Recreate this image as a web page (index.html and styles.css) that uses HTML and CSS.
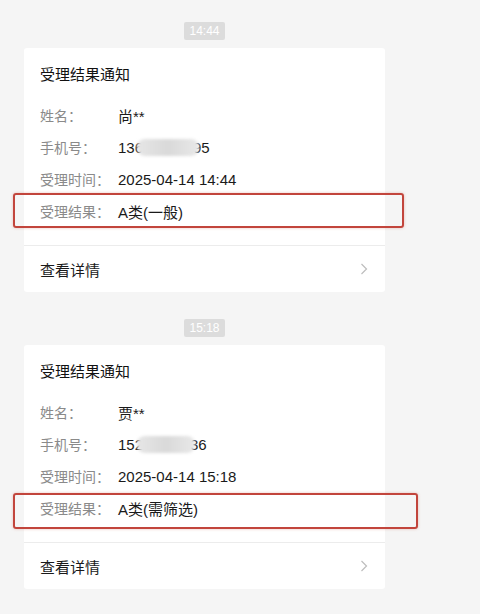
FILE: index.html
```html
<!DOCTYPE html>
<html lang="zh-CN">
<head>
    <meta charset="UTF-8">
    <meta name="viewport" content="width=device-width, initial-scale=1.0">
    <title>受理结果通知</title>
    <link rel="stylesheet" href="styles.css">
</head>
<body>
    <div class="chat">
        <div class="time"><span>14:44</span></div>
        <div class="card">
            <div class="card-title">受理结果通知</div>
            <div class="rows">
                <div class="row"><span class="label">姓名：</span><span class="value">尚**</span></div>
                <div class="row"><span class="label">手机号：</span><span class="value">136<span class="blur blur-a"></span>95</span></div>
                <div class="row"><span class="label">受理时间：</span><span class="value">2025-04-14 14:44</span></div>
                <div class="row result"><span class="label">受理结果：</span><span class="value">A类(一般)</span><span class="mark mark-a"></span></div>
            </div>
            <div class="more">
                <span>查看详情</span>
                <svg class="chev" width="8" height="12" viewBox="0 0 8 12"><polyline points="1.5,1 6.5,6 1.5,11" fill="none" stroke="#bdbdbd" stroke-width="1.2"/></svg>
            </div>
        </div>

        <div class="time"><span>15:18</span></div>
        <div class="card">
            <div class="card-title">受理结果通知</div>
            <div class="rows">
                <div class="row"><span class="label">姓名：</span><span class="value">贾**</span></div>
                <div class="row"><span class="label">手机号：</span><span class="value">152<span class="blur blur-b"></span>36</span></div>
                <div class="row"><span class="label">受理时间：</span><span class="value">2025-04-14 15:18</span></div>
                <div class="row result"><span class="label">受理结果：</span><span class="value">A类(需筛选)</span><span class="mark mark-b"></span></div>
            </div>
            <div class="more">
                <span>查看详情</span>
                <svg class="chev" width="8" height="12" viewBox="0 0 8 12"><polyline points="1.5,1 6.5,6 1.5,11" fill="none" stroke="#bdbdbd" stroke-width="1.2"/></svg>
            </div>
        </div>
    </div>
</body>
</html>
```

FILE: styles.css
```css
body {
    margin: 0;
    padding: 0;
    background: #f5f5f5;
    font-family: "Liberation Sans", "Noto Sans CJK SC", sans-serif;
    color: #1a1a1a;
}
.chat {
    width: 361px;
    margin-left: 24px;
    padding-top: 22px;
}
.time {
    display: flex;
    justify-content: center;
    height: 18px;
    margin-bottom: 8px;
}
.time span {
    background: #dcdcdc;
    color: #fff;
    font-size: 12px;
    line-height: 18px;
    padding: 0 5px;
    border-radius: 2px;
}
.card {
    background: #fff;
    border-radius: 3px;
    padding-top: 16px;
    margin-bottom: 27px;
}
.card-title {
    font-size: 15px;
    line-height: 22px;
    padding: 0 16px;
    color: #111;
}
.rows {
    padding: 13px 16px 18px;
}
.row {
    display: flex;
    align-items: center;
    height: 32px;
}
.result {
    position: relative;
}
.label {
    width: 78px;
    font-size: 14px;
    color: #8a8a8a;
}
.value {
    font-size: 15px;
    color: #1a1a1a;
    display: flex;
    align-items: center;
}
.blur {
    display: inline-block;
    height: 17px;
    background: linear-gradient(90deg, #e6e6e6, #d9d9d9 50%, #e8e8e8);
    border-radius: 8px;
    filter: blur(1.5px);
}
.blur-a {
    width: 62px;
    margin: 0 -6px 0 -6px;
}
.blur-b {
    width: 58px;
    margin: 0 -5px 0 -6px;
}
.mark {
    position: absolute;
    left: -27px;
    border: 2px solid #c2453c;
    border-radius: 3px;
    box-shadow: 0 0 3px rgba(200, 80, 60, 0.35);
}
.mark-a {
    top: -2px;
    bottom: -1px;
    right: -35px;
}
.mark-b {
    top: 1px;
    bottom: -5px;
    right: -49px;
}
.more {
    display: flex;
    align-items: center;
    justify-content: space-between;
    height: 46px;
    border-top: 1px solid #ececec;
    padding: 0 17px 0 16px;
    font-size: 15px;
    color: #1a1a1a;
}
```
